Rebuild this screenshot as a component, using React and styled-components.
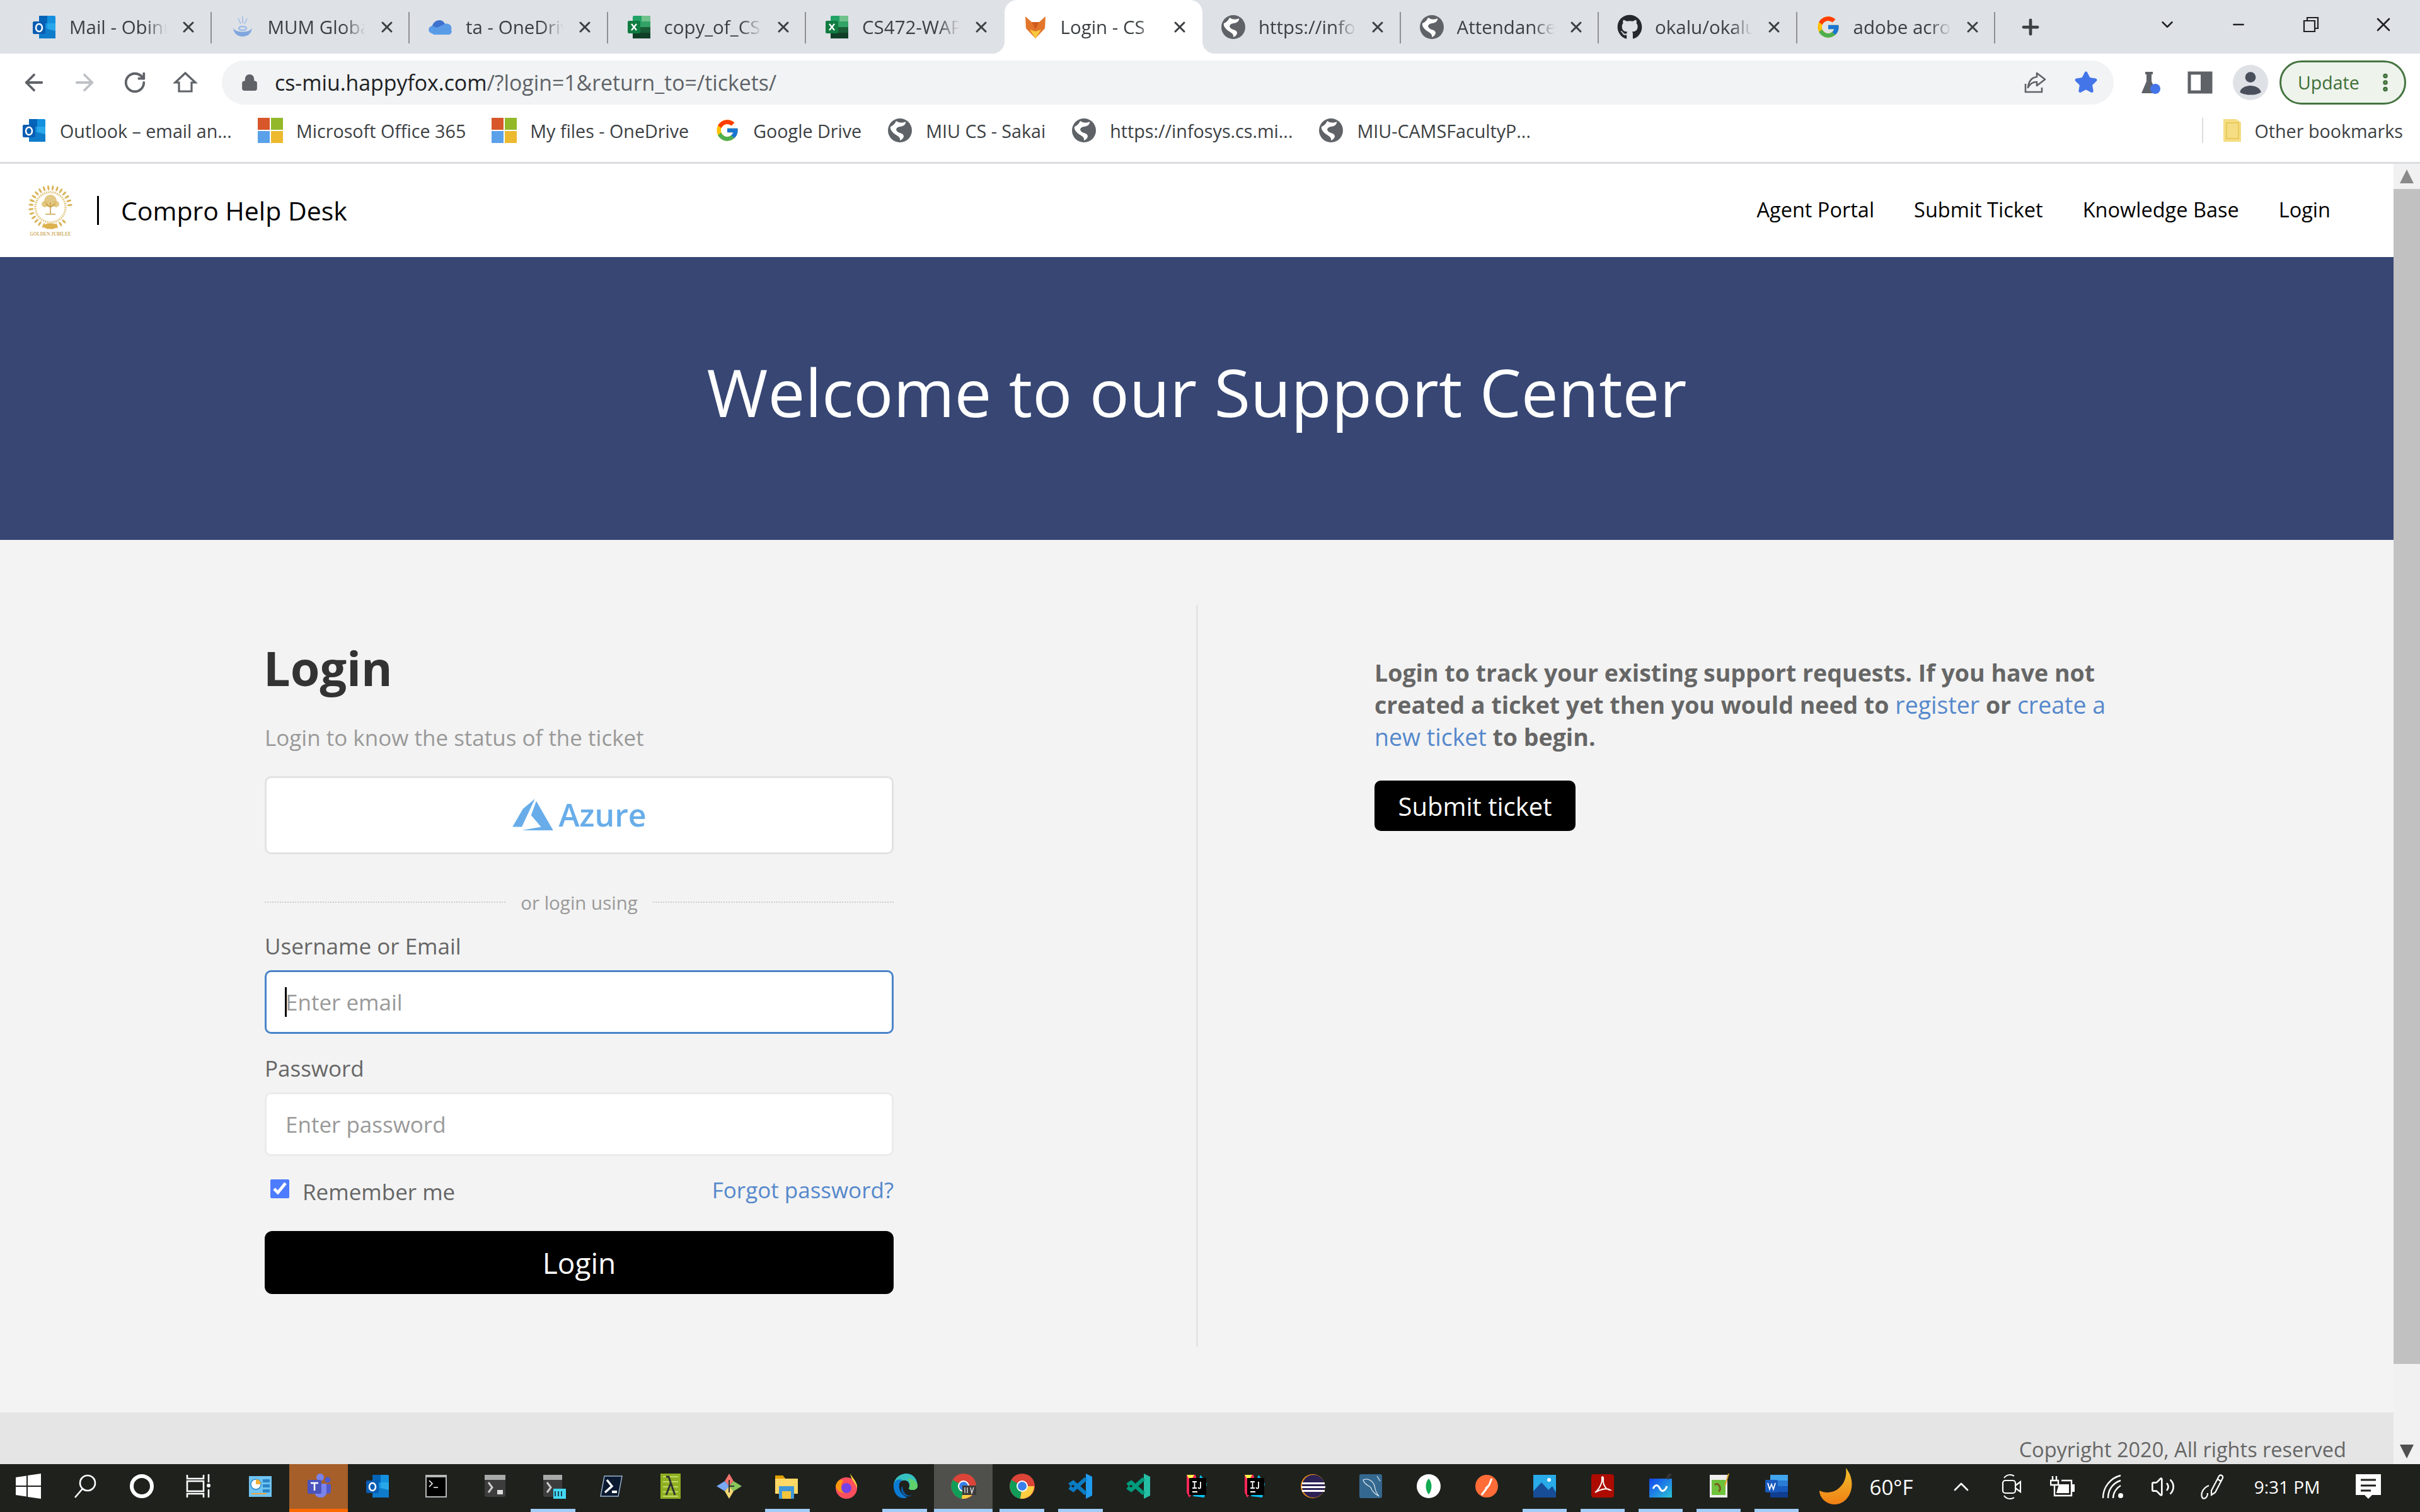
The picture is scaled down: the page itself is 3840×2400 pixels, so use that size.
import React from 'react';
import styled, { createGlobalStyle, css } from 'styled-components';
import { FcGoogle } from 'react-icons/fc';
import { FaGithub } from 'react-icons/fa';
import { ArrowLeft, ArrowRight, RotateCw, Lock, Star, X, Plus, ChevronDown, Minus, ChevronUp, Volume2, MoreVertical } from 'lucide-react';

const GlobalStyle = createGlobalStyle`
    html, body {
        margin: 0;
        padding: 0;
        background: #f3f3f3;
    }
    * {
        box-sizing: border-box;
    }
`;

const Screen = styled.div`
    width: 3840px;
    height: 2400px;
    display: flex;
    flex-direction: column;
    overflow: hidden;
    font-family: 'Open Sans', 'Noto Sans', sans-serif;
`;

/* browser chrome */
const TabStrip = styled.div`
    height: 85px;
    flex-shrink: 0;
    display: flex;
    padding-left: 21px;
    background: #dee1e6;
`;

const Tab = styled.div`
    position: relative;
    width: 314.5px;
    height: 85px;
    display: flex;
    align-items: center;
    padding: 0 12px 0 29px;
    font-size: 29.5px;
    color: #3c4043;
    ${(p) => p.$sep && css`
        &::after {
            content: '';
            position: absolute;
            right: 0;
            top: 19px;
            height: 50px;
            width: 2px;
            background: #8e9094;
        }
    `}
    ${(p) => p.$active && css`
        background: #fff;
        border-radius: 20px 20px 0 0;
        &::before, &::after {
            content: '';
            position: absolute;
            bottom: 0;
            width: 20px;
            height: 20px;
        }
        &::before {
            left: -20px;
            background: radial-gradient(circle at 0 0, transparent 20px, #fff 20.5px);
        }
        &::after {
            right: -20px;
            background: radial-gradient(circle at 100% 0, transparent 20px, #fff 20.5px);
        }
    `}
`;

const TabTitle = styled.div`
    width: 155px;
    margin-left: 20px;
    margin-right: 20px;
    flex-shrink: 0;
    white-space: nowrap;
    overflow: hidden;
    mask-image: linear-gradient(to right, #000 78%, transparent 100%);
`;

const NewTab = styled.div`
    width: 112px;
    display: flex;
    align-items: center;
    justify-content: center;
    color: #3c4043;
`;

const WindowButtons = styled.div`
    margin-left: auto;
    display: flex;
    color: #202124;
`;

const WindowButton = styled.div`
    width: ${(p) => p.$w || 115.3}px;
    height: 78px;
    display: flex;
    align-items: center;
    justify-content: center;
`;

const Toolbar = styled.div`
    height: 81px;
    flex-shrink: 0;
    display: flex;
    align-items: flex-start;
    padding: 11px 22px 0 14px;
    background: #fff;
`;

const NavButton = styled.div`
    width: 80px;
    height: 70px;
    display: flex;
    align-items: center;
    justify-content: center;
    color: ${(p) => (p.$disabled ? '#bdc1c6' : '#5f6368')};
`;

const Omnibox = styled.div`
    flex: 1;
    height: 70px;
    margin: 0 17px 0 18px;
    display: flex;
    align-items: center;
    padding: 0 24px 0 30px;
    border-radius: 35px;
    background: #f1f3f4;
    color: #5f6368;
`;

const Url = styled.div`
    margin-left: 26px;
    font-size: 33.8px;
    white-space: nowrap;
    color: #5f6368;
    flex: 1;
    b {
        font-weight: 400;
        color: #202124;
    }
`;

const OmniIcon = styled.div`
    width: 40px;
    display: flex;
    justify-content: center;
    margin-left: ${(p) => p.$gap || 0}px;
`;

const ToolIcon = styled.div`
    width: 80px;
    height: 70px;
    display: flex;
    align-items: center;
    justify-content: center;
    color: #5f6368;
`;

const UpdateButton = styled.div`
    width: 201px;
    height: 70px;
    margin-left: 6px;
    display: flex;
    align-items: center;
    justify-content: space-between;
    padding: 0 12px 0 26px;
    border: 3px solid #44743f;
    border-radius: 35px;
    background: #eef3ec;
    color: #3f7038;
    font-size: 28.5px;
`;

const BookmarkBar = styled.div`
    height: 94px;
    flex-shrink: 0;
    display: flex;
    align-items: center;
    padding: 0 27px 9px 34px;
    background: #fff;
    border-bottom: 3px solid #dadce0;
    font-size: 28.7px;
    color: #3c4043;
`;

const Bookmark = styled.div`
    display: flex;
    align-items: center;
    gap: 21px;
    margin-right: ${(p) => (p.$last ? 0 : 41)}px;
    white-space: nowrap;
`;

const BookmarkDivider = styled.div`
    width: 2px;
    height: 40px;
    margin-left: auto;
    margin-right: 32px;
    background: #dadce0;
`;

/* page */
const Viewport = styled.div`
    flex: 1;
    min-height: 0;
    display: flex;
`;

const Page = styled.div`
    flex: 1;
    min-width: 0;
    overflow: hidden;
    background: #f3f3f3;
`;

const Header = styled.div`
    height: 148px;
    display: flex;
    align-items: center;
    padding: 0 100px 0 44px;
    background: #fff;
`;

const Brand = styled.div`
    flex: 1;
    display: flex;
    align-items: center;
    font-size: 41px;
    font-weight: 500;
    color: #000;
`;

const BrandDivider = styled.div`
    width: 3px;
    height: 46px;
    margin: 0 35px 0 38px;
    background: #000;
`;

const Nav = styled.nav`
    display: flex;
    gap: 63px;
    padding-bottom: 3px;
    font-size: 32.5px;
    color: #000;
`;

const Hero = styled.div`
    height: 449px;
    display: flex;
    align-items: center;
    justify-content: center;
    background: #374673;
    color: #fff;
    font-size: 105px;
    padding-bottom: 22px;
`;

const Columns = styled.div`
    display: grid;
    grid-template-columns: 1898px 1fr;
    height: 1178px;
    margin: 103px 0 104px;
`;

const LoginColumn = styled.div`
    display: flex;
    flex-direction: column;
    padding: 50px 480px 0 420px;
`;

const Heading = styled.h1`
    margin: 0 0 0 -2px;
    height: 100px;
    line-height: 100px;
    font-size: 75.5px;
    font-weight: 700;
    color: #333;
`;

const Subtitle = styled.div`
    margin-top: 36px;
    height: 50px;
    line-height: 50px;
    font-size: 35px;
    color: #999;
`;

const SsoButton = styled.div`
    margin-top: 36px;
    height: 124px;
    padding-bottom: 2px;
    display: flex;
    align-items: center;
    justify-content: center;
    gap: 7px;
    border: 3px solid #e2e2e2;
    border-radius: 10px;
    background: #fff;
    font-size: 50px;
    font-weight: 600;
    color: #68ade9;
`;

const OrRow = styled.div`
    margin-top: 48px;
    height: 56px;
    display: flex;
    align-items: center;
    gap: 24px;
    font-size: 29.5px;
    color: #999;
    &::before, &::after {
        content: '';
        flex: 1;
        border-top: 2px dotted #ccc;
    }
`;

const Label = styled.label`
    display: block;
    margin-top: ${(p) => p.$top}px;
    height: 44px;
    line-height: 46px;
    font-size: 35px;
    color: #666;
`;

const FieldWrap = styled.div`
    position: relative;
    margin-top: 17px;
    height: 101px;
`;

const Input = styled.input`
    display: block;
    width: 100%;
    height: 100%;
    padding: 0 30px;
    border: 3px solid ${(p) => (p.$focused ? '#4a84c9' : '#ebebeb')};
    border-radius: 10px;
    background: #fff;
    outline: none;
    font-family: inherit;
    font-size: 35px;
    color: #333;
    &::placeholder {
        color: #999;
        opacity: 1;
    }
`;

const Caret = styled.div`
    position: absolute;
    left: 32px;
    top: 27px;
    width: 3px;
    height: 47px;
    background: #000;
`;

const OptionsRow = styled.div`
    margin-top: 25px;
    height: 56px;
    display: flex;
    align-items: center;
    justify-content: space-between;
    font-size: 35px;
`;

const Remember = styled.label`
    display: flex;
    align-items: center;
    color: #666;
    padding-top: 6px;
    input {
        width: 30px;
        height: 30px;
        margin: 0 21px 8px 9px;
        accent-color: #4d7cfe;
    }
`;

const Link = styled.a`
    color: #5588cc;
    font-weight: 400;
    text-decoration: none;
`;

const PrimaryButton = styled.div`
    margin-top: 38px;
    height: 100px;
    display: flex;
    align-items: center;
    justify-content: center;
    border-radius: 12px;
    background: #000;
    color: #fff;
    font-size: 46px;
`;

const InfoColumn = styled.div`
    border-left: 3px solid #e4e4e4;
    padding: 82px 400px 0 280px;
`;

const InfoText = styled.p`
    margin: 0;
    max-width: 1200px;
    font-size: 37.5px;
    line-height: 51px;
    font-weight: 700;
    color: #666;
`;

const SubmitButton = styled.div`
    width: 319px;
    height: 80px;
    margin-top: 44px;
    display: flex;
    align-items: center;
    justify-content: center;
    border-radius: 10px;
    background: #000;
    color: #fff;
    font-size: 40px;
`;

const Footer = styled.div`
    height: 200px;
    padding: 36px 75px 0 0;
    background: #e5e5e5;
    text-align: right;
    font-size: 32.5px;
    color: #666;
`;

const ScrollBar = styled.div`
    width: 42px;
    flex-shrink: 0;
    display: flex;
    flex-direction: column;
    align-items: center;
    background: #f1f1f1;
`;

const ScrollArrow = styled.div`
    height: 40px;
    display: flex;
    align-items: center;
    justify-content: center;
    &::before {
        content: '';
        border-left: 11px solid transparent;
        border-right: 11px solid transparent;
        ${(p) => (p.$down ? 'border-top: 22px solid #505050;' : 'border-bottom: 22px solid #8a8a8a;')}
    }
`;

const ScrollThumb = styled.div`
    width: 100%;
    height: 1865px;
    background: #c1c1c1;
`;

const ScrollSpace = styled.div`
    flex: 1;
`;

/* taskbar */
const Taskbar = styled.div`
    height: 76px;
    flex-shrink: 0;
    display: flex;
    background: #1f211d;
    color: #fff;
`;

const ShellButton = styled.div`
    width: 90px;
    display: flex;
    align-items: center;
    justify-content: center;
    padding-bottom: 6px;
`;

const AppList = styled.div`
    display: flex;
    margin-left: 6px;
`;

const AppSlot = styled.div`
    position: relative;
    width: ${(p) => (p.$narrow ? 92 : 93)}px;
    display: flex;
    align-items: center;
    justify-content: center;
    padding-bottom: 6px;
    background: ${(p) => (p.$state === 'alert' ? '#a65f28' : p.$state === 'focus' ? '#4f504c' : 'transparent')};
    ${(p) => p.$state && css`
        &::after {
            content: '';
            position: absolute;
            bottom: 0;
            height: 5px;
            left: ${p.$state === 'open' ? 11 : 0}px;
            right: ${p.$state === 'open' ? 11 : 0}px;
            background: ${p.$state === 'alert' ? '#ff6a00' : '#a3cdf8'};
        }
    `}
`;

const Tray = styled.div`
    flex: 1;
    display: flex;
    align-items: center;
    padding-bottom: 4px;
`;

const TrayItem = styled.div`
    width: ${(p) => p.$w}px;
    margin-left: ${(p) => p.$ml || 0}px;
    display: flex;
    align-items: center;
    justify-content: center;
    flex-shrink: 0;
    font-size: ${(p) => p.$size || 33}px;
    white-space: nowrap;
`;

/* drawings */
const IcoSvg = styled.svg`
    flex-shrink: 0;
    display: block;
`;

const Ico = ({ size = 40, vb = '0 0 40 40', children }) => (
    <IcoSvg width={size} height={size} viewBox={vb}>
        {children}
    </IcoSvg>
);

const OutlookIcon = ({ size }) => (
    <Ico size={size}>
        <rect x="12" y="2" width="26" height="36" rx="2" fill="#1490df" />
        <rect x="12" y="2" width="13" height="12" fill="#0364b8" />
        <rect x="25" y="14" width="13" height="12" fill="#28a8ea" />
        <path d="M12 20 L38 26 V38 H12 Z" fill="#0f7ccb" />
        <rect x="2" y="11" width="20" height="20" rx="2" fill="#0a5db2" />
        <ellipse cx="12" cy="21" rx="5" ry="6" fill="none" stroke="#fff" strokeWidth="2.6" />
    </Ico>
);

const ExcelIcon = () => (
    <Ico>
        <rect x="10" y="2" width="28" height="36" rx="2" fill="#21a366" />
        <rect x="24" y="2" width="14" height="9" fill="#6fc28c" />
        <rect x="10" y="11" width="28" height="9" fill="#33a266" />
        <rect x="10" y="20" width="28" height="9" fill="#185c37" />
        <rect x="10" y="29" width="28" height="9" fill="#103f27" />
        <rect x="2" y="10" width="20" height="20" rx="2" fill="#107c41" />
        <path d="M8 15 L16 25 M16 15 L8 25" stroke="#fff" strokeWidth="2.4" />
    </Ico>
);

const OneDriveIcon = () => (
    <Ico>
        <path d="M6 30 C-1 28 0 19 7 18 C10 8 23 6 27 15 C33 13 39 18 37 24 C39 29 36 32 32 32 H10 Z" fill="#5a9be8" />
        <path d="M7 18 C10 8 23 6 27 15 L14 21 Z" fill="#3f72cf" />
    </Ico>
);

const SwirlIcon = () => (
    <Ico>
        <path d="M20 3 V14 M13 6 L17 15 M27 6 L23 15" stroke="#a9c2e6" strokeWidth="1.8" />
        <path d="M5 20 C5 40 35 40 35 20 C35 30 5 30 5 20 Z" fill="#7fa7de" />
        <ellipse cx="20" cy="22" rx="6" ry="3" fill="none" stroke="#9dbde9" strokeWidth="2.5" />
    </Ico>
);

const FoxIcon = () => (
    <Ico>
        <path d="M4 3 L14 12 H26 L36 3 L35 22 L20 38 L5 22 Z" fill="#e2752a" />
        <path d="M20 38 L11 24 L20 27 L29 24 Z" fill="#f7c93e" />
        <path d="M14 12 H26 L20 24 Z" fill="#d25a1e" />
    </Ico>
);

const GlobeIcon = () => (
    <Ico>
        <circle cx="20" cy="20" r="19" fill="#5f6368" />
        <path d="M14 5 C20 9 26 8 29 6 C30 11 24 14 20 14 C15 15 12 18 16 22 C20 25 26 24 26 30 C25 33 23 35 20 36 C21 31 17 29 12 26 C7 22 4 18 5 14 C8 13 12 10 14 5 Z" fill="#fff" />
    </Ico>
);

const MsIcon = () => (
    <Ico>
        <rect x="0" y="0" width="19" height="19" fill="#d7562a" />
        <rect x="21" y="0" width="19" height="19" fill="#93b82a" />
        <rect x="0" y="21" width="19" height="19" fill="#5aa1ea" />
        <rect x="21" y="21" width="19" height="19" fill="#edb92e" />
    </Ico>
);

const FolderIcon = () => (
    <svg width="28" height="36" viewBox="0 0 28 36">
        <path d="M0 0 H20 L28 5 V36 H0 Z" fill="#f5dd84" />
        <rect x="5" y="6" width="19" height="25" fill="none" stroke="#e8c95a" strokeWidth="2" />
    </svg>
);

const HomeIcon = () => (
    <Ico>
        <path d="M20 5 L4 20 H10 V34 H30 V20 H36 Z" fill="none" stroke="#5f6368" strokeWidth="3.2" strokeLinejoin="miter" />
    </Ico>
);

const ShareIcon = () => (
    <Ico>
        <path d="M5 22 V35 H31 V28" fill="none" stroke="#5f6368" strokeWidth="2.6" />
        <path d="M23 5 L36 15 L23 25 V19 C16 19 12 22 9 28 C10 18 15 12 23 11 Z" fill="none" stroke="#5f6368" strokeWidth="2.6" strokeLinejoin="round" />
    </Ico>
);

const LabIcon = () => (
    <Ico>
        <path d="M13 3 H25 V7 H23 V18 L31 37 H7 L15 18 V7 H13 Z" fill="#5f6368" />
        <ellipse cx="29" cy="30" rx="8" ry="8" fill="#4475e8" />
    </Ico>
);

const SidePanelIcon = () => (
    <Ico>
        <rect x="3" y="5" width="34" height="30" fill="none" stroke="#5f6368" strokeWidth="5" />
        <rect x="21" y="5" width="16" height="30" fill="#5f6368" />
    </Ico>
);

const AvatarIcon = () => (
    <Ico size={56}>
        <circle cx="20" cy="20" r="20" fill="#dee1e6" />
        <circle cx="20" cy="14" r="6" fill="#4a4f5c" />
        <path d="M8 31 C10 21 30 21 32 31 C26 35 14 35 8 31 Z" fill="#4a4f5c" />
    </Ico>
);

const AzureLogo = () => (
    <svg width="67" height="50" viewBox="0 2.7 24 18.6">
        <path fill="currentColor" d="M5.483 21.3H24L14.025 4.013l-3.038 8.347 5.836 6.938L5.483 21.3zM13.23 2.7L6.105 8.677 0 19.253h5.505v.014L13.23 2.7z" />
    </svg>
);

const seal = Array.from({ length: 26 }, (_, i) => i);

const SealLogo = () => (
    <svg width="72" height="82" viewBox="0 0 72 82">
        {seal.map((i) => {
            const a = -70 + i * (320 / 25) + (i > 12 ? 40 : 0);
            return (
                <ellipse key={i} cx="36" cy="4" rx="1.6" ry="4" fill="#d9b45a" transform={`rotate(${a} 36 36) translate(0 1)`} />
            );
        })}
        <circle cx="36" cy="36" r="24" fill="none" stroke="#e3c988" strokeWidth="3.5" strokeDasharray="2 1.4" />
        <circle cx="36" cy="26" r="10" fill="#dcbc68" opacity="0.8" />
        <circle cx="27" cy="31" r="5" fill="#dcbc68" opacity="0.8" />
        <circle cx="45" cy="31" r="5" fill="#dcbc68" opacity="0.8" />
        <path d="M36 28 V46 M36 36 L29 31 M36 36 L43 31 M28 47 H44" stroke="#c9a24a" strokeWidth="1.6" fill="none" />
        <ellipse cx="36" cy="66" rx="11" ry="4.5" fill="#dcb14e" />
        <text x="36" y="81" textAnchor="middle" fontFamily="'Liberation Serif', serif" fontSize="7.4" fontWeight="700" fill="#cfb06a">GOLDEN JUBILEE</text>
    </svg>
);

/* taskbar apps */
const TWin = () => (
    <Ico>
        <path d="M0 6 L17 3.5 V19 H0 Z M19 3 L40 0 V19 H19 Z M0 21 H17 V36.5 L0 34 Z M19 21 H40 V40 L19 37 Z" fill="#fff" />
    </Ico>
);
const TSearch = () => (
    <Ico>
        <circle cx="24" cy="15" r="12" fill="none" stroke="#fff" strokeWidth="2.6" />
        <path d="M16 24 L4 38" stroke="#fff" strokeWidth="2.6" />
    </Ico>
);
const TCortana = () => (
    <Ico>
        <circle cx="20" cy="20" r="16" fill="none" stroke="#fff" strokeWidth="6" />
    </Ico>
);
const TTaskView = () => (
    <Ico>
        <path d="M2 2 V8 H28 V2 M2 38 V32 H28 V38" fill="none" stroke="#fff" strokeWidth="2.6" />
        <rect x="2" y="12" width="26" height="16" fill="none" stroke="#fff" strokeWidth="2.6" />
        <path d="M36 1 V14 M36 25 V38" stroke="#fff" strokeWidth="2.6" />
        <circle cx="36" cy="19" r="3" fill="#fff" />
    </Ico>
);
const TPanel = () => (
    <Ico>
        <rect x="2" y="4" width="36" height="33" fill="#6fc4f2" />
        <circle cx="13" cy="17" r="8" fill="#fff" stroke="#2a86c8" strokeWidth="1.5" />
        <path d="M13 17 V9 A8 8 0 0 1 21 17 Z" fill="#f3b13a" />
        <rect x="24" y="9" width="11" height="5" fill="#2a86c8" />
        <rect x="24" y="17" width="11" height="5" fill="#2a86c8" />
        <rect x="24" y="25" width="11" height="5" fill="#2a86c8" />
        <path d="M6 32 H30" stroke="#f3a13a" strokeWidth="2" />
    </Ico>
);
const TTeams = () => (
    <Ico>
        <circle cx="22" cy="6" r="6" fill="#7b83eb" />
        <circle cx="34" cy="10" r="4.5" fill="#5059c9" />
        <path d="M28 17 H39 V28 C39 33 31 33 28 29 Z" fill="#5059c9" />
        <path d="M12 16 H32 V30 C32 41 14 41 13 30 Z" fill="#7b83eb" />
        <rect x="2" y="10" width="22" height="22" rx="2" fill="#4b53bc" />
        <path d="M7 15 H19 M13 15 V27" stroke="#fff" strokeWidth="2.6" />
    </Ico>
);
const TCmd = () => (
    <Ico>
        <rect x="3" y="2" width="34" height="36" fill="#b8b8b8" />
        <rect x="5" y="6" width="30" height="30" fill="#000" />
        <path d="M9 11 L14 16 L9 21 M16 22 H23" stroke="#fff" strokeWidth="1.5" fill="none" />
    </Ico>
);
const TShell = ({ pre }) => (
    <Ico>
        <rect x="4" y="2" width={pre ? 30 : 33} height="35" rx="3" fill="#3d3d3d" />
        <rect x="4" y="2" width={pre ? 30 : 33} height="8" fill="#a9a9a9" />
        <path d="M10 14 L16 22 L10 30" stroke="#ccc" strokeWidth="3" fill="none" />
        {pre ? (
            <>
                <rect x="20" y="24" width="20" height="16" fill="#43d7f2" />
                <path d="M23 28 V36 M28 28 V36 M33 28 V36" stroke="#123" strokeWidth="1.6" />
            </>
        ) : (
            <rect x="24" y="26" width="9" height="7" fill="#ddd" />
        )}
    </Ico>
);
const TPs = () => (
    <Ico>
        <path d="M8 4 H36 L30 36 H2 Z" fill="#0b1a30" stroke="#9db5cf" strokeWidth="1.4" />
        <path d="M12 10 L20 20 L9 30" stroke="#fff" strokeWidth="3.4" fill="none" />
        <rect x="20" y="27" width="8" height="4" fill="#fff" />
    </Ico>
);
const TLambda = () => (
    <Ico>
        <rect x="4" y="0" width="32" height="40" fill="#8fb021" />
        <path d="M8 5 H32 M8 13 H32 M8 21 H32 M8 29 H32 M8 36 H32" stroke="#c4d96a" strokeWidth="2" />
        <path d="M13 5 H17 L27 34 M20 16 L13 34" stroke="#333" strokeWidth="3" fill="none" />
    </Ico>
);
const TGit = () => (
    <Ico>
        <path d="M20 0 L27 12 L20 20 L13 12 Z" fill="#f2736f" />
        <path d="M20 20 L27 12 L40 20 L27 28 Z" fill="#8ac65a" />
        <path d="M20 20 L13 28 L0 20 L13 12 Z" fill="#7aa9f5" />
        <path d="M20 20 L27 28 L20 40 L13 28 Z" fill="#f3d774" />
        <path d="M20 10 V30 M20 20 L28 20" stroke="#333" strokeWidth="2" />
    </Ico>
);
const TExplorer = () => (
    <Ico>
        <path d="M0 3 H12 L16 8 H36 V32 H0 Z" fill="#ffd866" />
        <path d="M0 3 H12 L16 8 H0 Z" fill="#e0a000" />
        <rect x="6" y="20" width="24" height="20" fill="#3f97d8" />
        <rect x="11" y="28" width="14" height="12" fill="#f3c63d" />
    </Ico>
);
const TFirefox = () => (
    <Ico>
        <circle cx="20" cy="23" r="17" fill="#ff4f5e" />
        <path d="M26 0 C32 10 38 14 37 24 C35 14 28 12 26 0 Z" fill="#ffd43b" />
        <path d="M3 20 C5 10 12 8 15 12 C10 16 11 26 20 30 C12 32 5 28 3 20 Z" fill="#ff980e" />
        <circle cx="20" cy="23" r="8" fill="#7542e5" />
    </Ico>
);
const TEdge = () => (
    <Ico>
        <path d="M2 20 C2 6 14 0 22 0 C34 0 40 10 40 20 C40 26 30 28 26 24 C30 14 22 8 14 12 C6 16 2 24 2 20 Z" fill="#35c1c1" />
        <path d="M24 8 C34 8 40 14 40 20 C40 26 30 28 26 24 C30 18 28 12 24 8 Z" fill="#5fd06a" />
        <path d="M2 20 C2 10 10 8 16 10 C8 14 8 32 24 38 C12 42 2 34 2 20 Z" fill="#0c7bd4" />
        <path d="M16 20 C16 30 24 38 32 34 C24 40 12 34 14 22 Z" fill="#0c59a4" />
    </Ico>
);
const TChrome = ({ dev }) => (
    <Ico>
        <circle cx="20" cy="20" r="20" fill="#db4437" />
        <path d="M20 20 L3 30 A20 20 0 0 1 3 10 Z M3 10 L20 20 L17 40 A20 20 0 0 1 3 30 Z" fill="#0f9d58" />
        <path d="M20 20 H39 A20 20 0 0 1 17 40 Z" fill="#ffcd40" />
        <circle cx="20" cy="20" r="9" fill="#fff" />
        <circle cx="20" cy="20" r="7" fill="#3a80ea" />
        {dev && <rect x="18" y="19" width="22" height="15" fill="#3b3b3b" />}
        {dev && <path d="M22 22 V31 M26 22 V31 M31 22 L33 31 L36 22" stroke="#eee" strokeWidth="1.3" fill="none" />}
    </Ico>
);
const TCode = ({ color, dark }) => (
    <Ico>
        <path d="M28 0 L38 5 V35 L28 40 Z" fill={color} />
        <path d="M28 8 L8 26 L2 22 M28 32 L8 14 L2 18" fill="none" stroke={dark} strokeWidth="6" />
    </Ico>
);
const TIntellij = () => (
    <Ico>
        <path d="M4 2 H18 L22 20 L8 38 L4 30 Z" fill="#fe2857" />
        <path d="M4 2 H16 L10 12 Z" fill="#fcf84a" />
        <path d="M26 2 L36 16 L32 38 L14 36 Z" fill="#07c3f2" />
        <rect x="8" y="7" width="27" height="27" fill="#000" />
        <path d="M13 13 H20 M16.5 13 V23 M13 23 H20 M26 13 V22 C26 24 23 24 22 22 M13 29 H21" stroke="#fff" strokeWidth="1.8" fill="none" />
    </Ico>
);
const TEclipse = () => (
    <Ico>
        <circle cx="20" cy="20" r="19" fill="#f7941e" />
        <circle cx="21" cy="20" r="18" fill="#2c2255" />
        <path d="M3 14 H39 V17 H3 Z M2 20 H40 V23 H2 Z M3 26 H39 V29 H3 Z" fill="#fff" />
    </Ico>
);
const TMysql = () => (
    <Ico>
        <rect x="2" y="1" width="36" height="38" rx="3" fill="#35688f" />
        <path d="M8 10 C18 6 26 14 27 24 C28 30 31 33 33 36 C26 32 22 28 20 22 C16 18 10 18 8 10 Z M30 4 L35 12" fill="none" stroke="#cfe0ea" strokeWidth="1.3" />
    </Ico>
);
const TMongo = () => (
    <Ico>
        <circle cx="20" cy="20" r="19" fill="#fff" />
        <path d="M20 8 C26 14 26 26 20 33 C14 26 14 14 20 8 Z" fill="#13aa52" />
    </Ico>
);
const TPostman = () => (
    <Ico>
        <circle cx="20" cy="20" r="18" fill="#ff6c37" />
        <path d="M28 8 L24 18 L12 34 M24 18 L18 24" stroke="#fff" strokeWidth="3" fill="none" />
    </Ico>
);
const TPhotos = () => (
    <Ico>
        <rect x="2" y="2" width="36" height="36" fill="#29abe9" />
        <path d="M2 38 V28 L15 14 L26 26 L32 20 L38 30 V38 Z" fill="#174d96" />
        <circle cx="27" cy="10" r="3" fill="#fff" />
    </Ico>
);
const TAcrobat = () => (
    <Ico>
        <rect x="2" y="1" width="36" height="37" rx="4" fill="#ad0b00" />
        <path d="M8 30 C14 26 20 14 19 8 C18 4 22 4 21 10 C20 18 26 26 32 26 C26 22 14 26 8 30 Z" fill="none" stroke="#fff" strokeWidth="2" />
    </Ico>
);
const TMail = () => (
    <Ico>
        <defs>
            <linearGradient id="wb" x1="0" y1="0" x2="1" y2="1">
                <stop offset="0" stopColor="#1246f0" />
                <stop offset="1" stopColor="#2bc3d6" />
            </linearGradient>
        </defs>
        <rect x="2" y="8" width="36" height="30" fill="url(#wb)" />
        <path d="M8 24 C12 16 16 18 19 24 C22 30 27 28 30 20" stroke="#fff" strokeWidth="3" fill="none" />
        <path d="M30 8 L36 0" stroke="#333" strokeWidth="5" />
    </Ico>
);
const TNotepad = () => (
    <Ico>
        <rect x="6" y="2" width="28" height="36" fill="#eee" />
        <rect x="9" y="10" width="22" height="24" fill="#6fc23c" />
        <path d="M14 18 C20 12 26 26 20 28" stroke="#7a5b1f" strokeWidth="3" fill="none" />
        <path d="M36 0 L30 20" stroke="#d9a428" strokeWidth="2" />
    </Ico>
);
const TWord = () => (
    <Ico>
        <rect x="10" y="2" width="28" height="36" rx="2" fill="#2b7cd3" />
        <rect x="10" y="2" width="28" height="9" fill="#41a5ee" />
        <rect x="10" y="20" width="28" height="9" fill="#185abd" />
        <rect x="10" y="29" width="28" height="9" fill="#103f91" />
        <rect x="2" y="10" width="20" height="20" rx="2" fill="#185abd" />
        <path d="M6 15 L9 25 L12 17 L15 25 L18 15" stroke="#fff" strokeWidth="1.8" fill="none" />
    </Ico>
);
const Moon = () => (
    <svg width="60" height="60" viewBox="0 0 60 60">
        <defs>
            <linearGradient id="moon" x1="0" y1="0" x2="0" y2="1">
                <stop offset="0" stopColor="#f0c02d" />
                <stop offset="1" stopColor="#f07f14" />
            </linearGradient>
        </defs>
        <path d="M44 0 C64 24 50 60 24 58 C10 56 2 46 2 36 C22 46 48 30 44 0 Z" fill="url(#moon)" />
    </svg>
);
const MeetNow = () => (
    <Ico>
        <path d="M8 6 C12 0 20 0 24 3 M8 34 C12 40 20 40 24 37" fill="none" stroke="#fff" strokeWidth="2" />
        <rect x="6" y="10" width="20" height="20" rx="4" fill="none" stroke="#fff" strokeWidth="2.2" />
        <path d="M26 18 L34 12 V28 L26 22" fill="none" stroke="#fff" strokeWidth="2.2" />
    </Ico>
);
const Battery = () => (
    <Ico>
        <path d="M4 3 V10 M10 3 V10 M1 10 H13 V17 H1 Z M7 17 V34 H34 V10 H18" stroke="#fff" strokeWidth="2.4" fill="none" />
        <path d="M14 16 H30 V30 H10 Z" fill="#fff" />
        <rect x="35" y="16" width="4" height="12" fill="#fff" />
    </Ico>
);
const Wifi = () => (
    <Ico>
        <path d="M4 38 C4 20 16 6 32 2 M12 38 C12 24 20 14 32 10 M20 38 C20 30 25 22 32 18" stroke="#fff" strokeWidth="2.4" fill="none" />
        <circle cx="32" cy="34" r="4" fill="#fff" />
    </Ico>
);
const PenIcon = () => (
    <Ico>
        <path d="M18 26 L30 3 C32 0 37 2 36 6 L24 29 L18 33 Z M28 8 L33 11" fill="none" stroke="#fff" strokeWidth="2.2" />
        <path d="M14 18 C4 22 0 32 4 38 C8 40 12 36 12 30" fill="none" stroke="#fff" strokeWidth="2.2" />
    </Ico>
);
const Notification = () => (
    <Ico>
        <path d="M0 0 H40 V33 H26 L20 39 L14 33 H0 Z" fill="#fff" />
        <path d="M8 9 H32 M8 18 H32 M8 26 H24" stroke="#1f211d" strokeWidth="3" />
    </Ico>
);

const tabs = [
    { title: 'Mail - Obinna', icon: <OutlookIcon />, sep: true },
    { title: 'MUM Global', icon: <SwirlIcon />, sep: true },
    { title: 'ta - OneDrive', icon: <OneDriveIcon />, sep: true },
    { title: 'copy_of_CS472', icon: <ExcelIcon />, sep: true },
    { title: 'CS472-WAP', icon: <ExcelIcon /> },
    { title: 'Login - CS', icon: <FoxIcon />, active: true },
    { title: 'https://infosys', icon: <GlobeIcon />, sep: true },
    { title: 'Attendance', icon: <GlobeIcon />, sep: true },
    { title: 'okalu/okalu', icon: <FaGithub size={40} color="#24292e" />, sep: true },
    { title: 'adobe acrobat', icon: <FcGoogle size={40} />, sep: true },
];

const bookmarks = [
    { title: 'Outlook – email an...', icon: <OutlookIcon /> },
    { title: 'Microsoft Office 365', icon: <MsIcon /> },
    { title: 'My files - OneDrive', icon: <MsIcon /> },
    { title: 'Google Drive', icon: <FcGoogle size={40} /> },
    { title: 'MIU CS - Sakai', icon: <GlobeIcon /> },
    { title: 'https://infosys.cs.mi...', icon: <GlobeIcon /> },
    { title: 'MIU-CAMSFacultyP...', icon: <GlobeIcon /> },
];

const apps = [
    { icon: <TPanel /> },
    { icon: <TTeams />, state: 'alert' },
    { icon: <OutlookIcon /> },
    { icon: <TCmd /> },
    { icon: <TShell /> },
    { icon: <TShell pre />, state: 'open' },
    { icon: <TPs /> },
    { icon: <TLambda /> },
    { icon: <TGit /> },
    { icon: <TExplorer />, state: 'open' },
    { icon: <TFirefox /> },
    { icon: <TEdge />, state: 'open' },
    { icon: <TChrome dev />, state: 'focus' },
    { icon: <TChrome />, state: 'open' },
    { icon: <TCode color="#1f9cf0" dark="#0a7cc4" />, state: 'open' },
    { icon: <TCode color="#24bfa5" dark="#009a7c" /> },
    { icon: <TIntellij /> },
    { icon: <TIntellij /> },
    { icon: <TEclipse /> },
    { icon: <TMysql /> },
    { icon: <TMongo /> },
    { icon: <TPostman /> },
    { icon: <TPhotos />, state: 'open' },
    { icon: <TAcrobat />, state: 'open' },
    { icon: <TMail />, state: 'open' },
    { icon: <TNotepad />, state: 'open' },
    { icon: <TWord />, state: 'open' },
];

const App = () => {
    return (
        <Screen>
            <GlobalStyle />
            <TabStrip>
                {tabs.map((tab) => (
                    <Tab key={tab.title} $active={tab.active} $sep={tab.sep}>
                        {tab.icon}
                        <TabTitle>{tab.title}</TabTitle>
                        <X size={28} strokeWidth={2.6} color="#3c4043" />
                    </Tab>
                ))}
                <NewTab>
                    <Plus size={38} strokeWidth={3} />
                </NewTab>
                <WindowButtons>
                    <WindowButton $w={110}><ChevronDown size={30} strokeWidth={2} /></WindowButton>
                    <WindowButton><Minus size={26} strokeWidth={2.4} /></WindowButton>
                    <WindowButton>
                        <svg width="26" height="26" viewBox="0 0 26 26">
                            <path d="M2 7 H19 V24 H2 Z M7 7 V2 H24 V19 H19" fill="none" stroke="#202124" strokeWidth="2.2" />
                        </svg>
                    </WindowButton>
                    <WindowButton><X size={36} strokeWidth={1.8} /></WindowButton>
                </WindowButtons>
            </TabStrip>
            <Toolbar>
                <NavButton><ArrowLeft size={42} strokeWidth={2.2} /></NavButton>
                <NavButton $disabled><ArrowRight size={42} strokeWidth={2.2} /></NavButton>
                <NavButton><RotateCw size={38} strokeWidth={2.4} /></NavButton>
                <NavButton><HomeIcon /></NavButton>
                <Omnibox>
                    <Lock size={28} fill="#5f6368" strokeWidth={2.4} />
                    <Url><b>cs-miu.happyfox.com</b>/?login=1&amp;return_to=/tickets/</Url>
                    <OmniIcon><ShareIcon /></OmniIcon>
                    <OmniIcon $gap={41}><Star size={38} fill="#4475e8" color="#4475e8" /></OmniIcon>
                </Omnibox>
                <ToolIcon><LabIcon /></ToolIcon>
                <ToolIcon><SidePanelIcon /></ToolIcon>
                <ToolIcon><AvatarIcon /></ToolIcon>
                <UpdateButton>
                    Update
                    <MoreVertical size={36} strokeWidth={3} />
                </UpdateButton>
            </Toolbar>
            <BookmarkBar>
                {bookmarks.map((b) => (
                    <Bookmark key={b.title}>
                        {b.icon}
                        {b.title}
                    </Bookmark>
                ))}
                <BookmarkDivider />
                <Bookmark $last>
                    <FolderIcon />
                    Other bookmarks
                </Bookmark>
            </BookmarkBar>
            <Viewport>
                <Page>
                    <Header>
                        <Brand>
                            <SealLogo />
                            <BrandDivider />
                            Compro Help Desk
                        </Brand>
                        <Nav>
                            <span>Agent Portal</span>
                            <span>Submit Ticket</span>
                            <span>Knowledge Base</span>
                            <span>Login</span>
                        </Nav>
                    </Header>
                    <Hero>Welcome to our Support Center</Hero>
                    <Columns>
                        <LoginColumn>
                            <Heading>Login</Heading>
                            <Subtitle>Login to know the status of the ticket</Subtitle>
                            <SsoButton>
                                <AzureLogo />
                                Azure
                            </SsoButton>
                            <OrRow>or login using</OrRow>
                            <Label $top={19}>Username or Email</Label>
                            <FieldWrap>
                                <Input $focused placeholder="Enter email" readOnly />
                                <Caret />
                            </FieldWrap>
                            <Label $top={32}>Password</Label>
                            <FieldWrap>
                                <Input placeholder="Enter password" readOnly />
                            </FieldWrap>
                            <OptionsRow>
                                <Remember>
                                    <input type="checkbox" defaultChecked />
                                    Remember me
                                </Remember>
                                <Link>Forgot password?</Link>
                            </OptionsRow>
                            <PrimaryButton>Login</PrimaryButton>
                        </LoginColumn>
                        <InfoColumn>
                            <InfoText>
                                Login to track your existing support requests. If you have not created a ticket yet then you would need to <Link>register</Link> or <Link>create a new ticket</Link> to begin.
                            </InfoText>
                            <SubmitButton>Submit ticket</SubmitButton>
                        </InfoColumn>
                    </Columns>
                    <Footer>Copyright 2020, All rights reserved</Footer>
                </Page>
                <ScrollBar>
                    <ScrollArrow />
                    <ScrollThumb />
                    <ScrollSpace />
                    <ScrollArrow $down />
                </ScrollBar>
            </Viewport>
            <Taskbar>
                <ShellButton><TWin /></ShellButton>
                <ShellButton><TSearch /></ShellButton>
                <ShellButton><TCortana /></ShellButton>
                <ShellButton><TTaskView /></ShellButton>
                <AppList>
                    {apps.map((app, i) => (
                        <AppSlot key={i} $state={app.state} $narrow={i > 14}>{app.icon}</AppSlot>
                    ))}
                </AppList>
                <Tray>
                    <TrayItem $w={100}><Moon /></TrayItem>
                    <TrayItem $w={72}>60°F</TrayItem>
                    <TrayItem $w={80} $ml={35}>
                        <ChevronUp size={40} strokeWidth={1.6} />
                    </TrayItem>
                    <TrayItem $w={80}><MeetNow /></TrayItem>
                    <TrayItem $w={82}><Battery /></TrayItem>
                    <TrayItem $w={78}><Wifi /></TrayItem>
                    <TrayItem $w={80}><Volume2 size={40} strokeWidth={1.6} /></TrayItem>
                    <TrayItem $w={78}><PenIcon /></TrayItem>
                    <TrayItem $w={158} $size={28}>9:31 PM</TrayItem>
                    <TrayItem $w={100}><Notification /></TrayItem>
                </Tray>
            </Taskbar>
        </Screen>
    );
};

export default App;
